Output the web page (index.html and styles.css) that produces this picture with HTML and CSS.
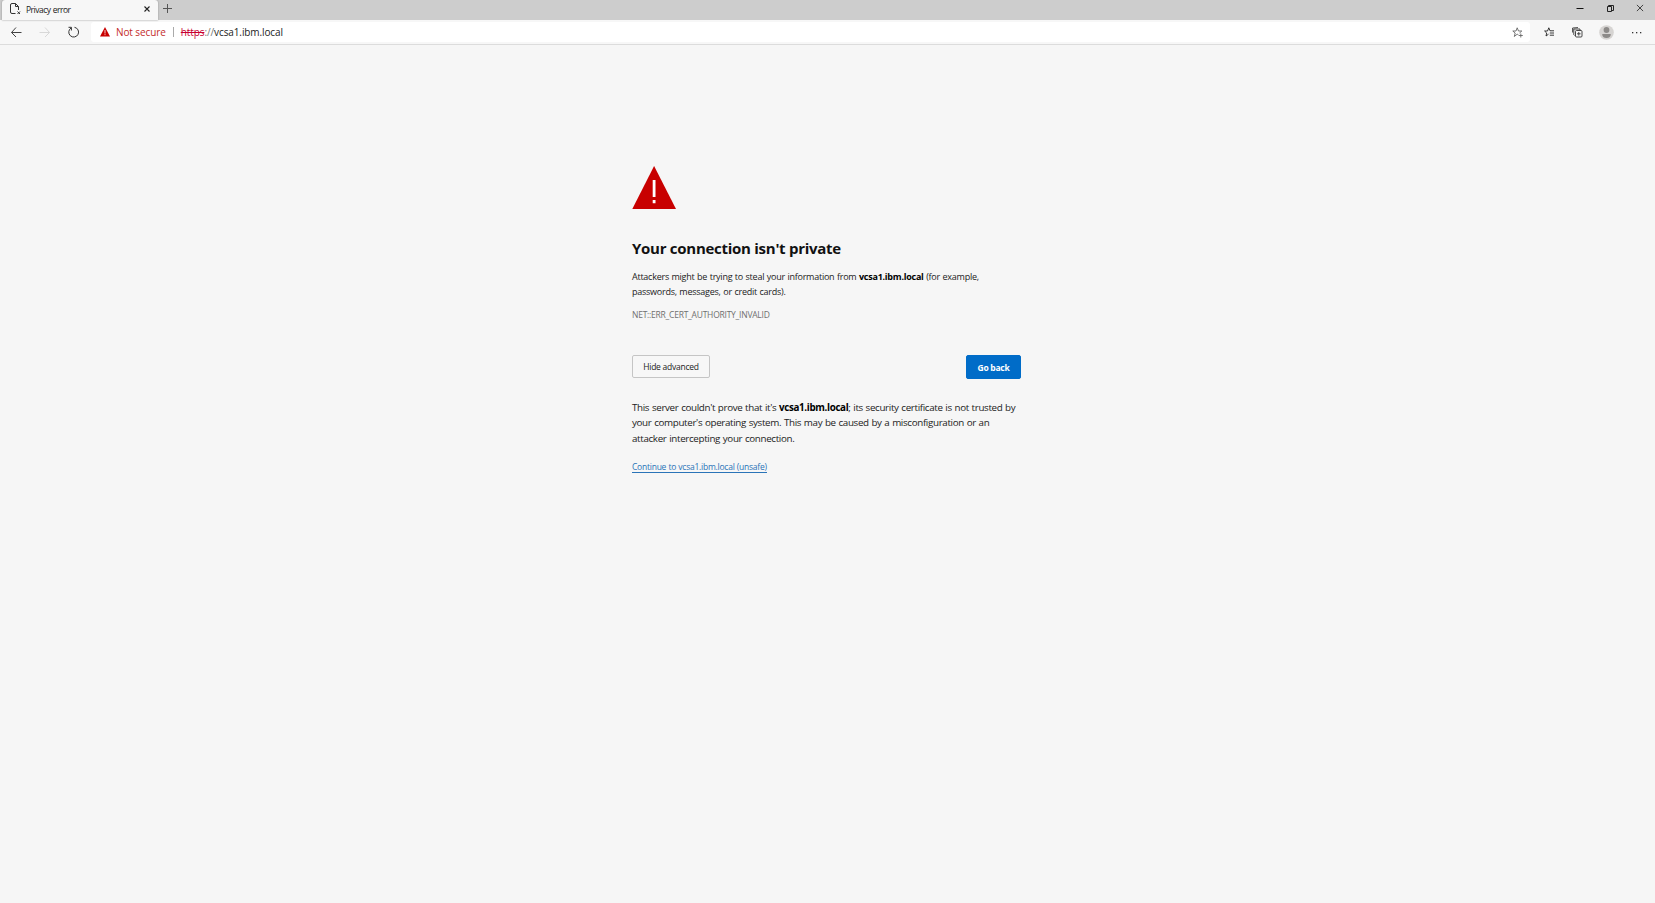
FILE: index.html
```html
<!DOCTYPE html>
<html lang="en">
<head>
    <meta charset="UTF-8">
    <title>Privacy error</title>
    <link rel="stylesheet" href="styles.css">
</head>
<body>
    <header class="browser">
        <div class="tab-strip">
            <div class="tab">
                <svg class="page-icon" width="11" height="12" viewBox="0 0 11 12" fill="none" stroke="#333">
                    <path d="M5.5 10.5H2Q.5 10.5 .5 9V2Q.5.5 2 .5H5.5L8.5 3.5V7M5.5.5V3.5H8.5"/>
                    <path d="M7.5 8.5L10 11M10 8.5L7.5 11"/>
                </svg>
                <span class="tab-title">Privacy error</span>
                <svg class="tab-close" width="6" height="6" viewBox="0 0 6 6" stroke="#222" stroke-width="1.1">
                    <path d="M.5.5L5.5 5.5M5.5.5L.5 5.5"/>
                </svg>
            </div>
            <svg class="new-tab" width="9" height="9" viewBox="0 0 9 9" stroke="#555">
                <path d="M4.5 0V9M0 4.5H9"/>
            </svg>
            <div class="window-controls">
                <svg width="8" height="8" viewBox="0 0 8 8" stroke="#111"><path d="M.5 4.5H7.5"/></svg>
                <svg width="8" height="8" viewBox="0 0 8 8" fill="none" stroke="#222"><path d="M1.5 2.5H5.5V7.5H1.5ZM2.5 2.5V1.5H7.5V6.5H5.5"/></svg>
                <svg width="8" height="8" viewBox="0 0 8 8" stroke="#333" stroke-width=".9"><path d="M.9.9L7.1 7.1M7.1.9L.9 7.1"/></svg>
            </div>
        </div>

        <div class="toolbar">
            <div class="nav">
                <svg width="12" height="12" viewBox="0 0 12 12" fill="none" stroke="#444"><path d="M11.5 6.5H1.5M6 1.5L1.5 6.5L6 11"/></svg>
                <svg width="12" height="12" viewBox="0 0 12 12" fill="none" stroke="#d8d8d8"><path d="M.5 6.5H10.5M6 1.5L10.5 6.5L6 11"/></svg>
                <svg width="12" height="12" viewBox="0 0 12 12" fill="none" stroke="#333"><path d="M3.2 1.9A4.9 4.9 0 1 0 6.5 1.3M.5 1.3H3.4V4.5"/></svg>
            </div>
            <div class="address-bar">
                <svg class="warn-icon" width="10" height="10" viewBox="0 0 10 10">
                    <path d="M5 0L10 9.5H0Z" fill="#c80000"/>
                    <path d="M5 3V6.5M5 7.2V8.2" stroke="#fff" stroke-width=".8"/>
                </svg>
                <span class="not-secure">Not secure</span>
                <span class="divider"></span>
                <span class="url"><span class="scheme">https</span><span class="slashes">://</span>vcsa1.ibm.local</span>
                <svg class="star" width="12" height="11" viewBox="0 0 12 11" fill="none" stroke="#666" stroke-width=".9">
                    <path d="M6.5 8L5.2 7.2L2.3 9.5L3.2 6L.8 4H4L5.2.8L6.5 4H9.8L7.5 6M8.8 6.5V10.5M6.8 8.5H10.8"/>
                </svg>
            </div>
            <div class="actions">
                <svg width="11" height="10" viewBox="0 0 11 10" fill="none" stroke="#222" stroke-width=".9">
                    <path d="M4.5 7.2L2 9L2.7 6L.6 4H3.5L4.8.8L6 3.8H10M5.8 6H10M5.8 8.2H10"/>
                </svg>
                <svg width="11" height="11" viewBox="0 0 11 11" fill="none" stroke="#333" stroke-width=".9">
                    <rect x="3.5" y="3.5" width="6.5" height="6.5" rx="1"/>
                    <path d="M6.8 5V8.6M5 6.8H8.6M2.5 8.5L1.8 7.8V2H8V3M.6 5.5V1L6 .6"/>
                </svg>
                <svg width="15" height="15" viewBox="0 0 15 15">
                    <circle cx="7.5" cy="7.5" r="7.3" fill="#d6d4d2"/>
                    <circle cx="7.5" cy="5" r="2.9" fill="#8c8a88"/>
                    <path d="M3.2 9H11.8Q11.8 13 7.5 13T3.2 9Z" fill="#8c8a88"/>
                </svg>
                <svg width="11" height="3" viewBox="0 0 11 3" fill="#333">
                    <rect x="1" y="1" width="1.3" height="1.3"/><rect x="5" y="1" width="1.3" height="1.3"/><rect x="9" y="1" width="1.3" height="1.3"/>
                </svg>
            </div>
        </div>
    </header>

    <main class="interstitial">
        <svg class="alert-icon" width="44" height="43" viewBox="0 0 44 43">
            <path d="M22.1 0L44 43H.3Z" fill="#c80000"/>
            <path d="M20.7 14H23.5V31H20.7ZM20.7 34H23.5V37.3H20.7Z" fill="#fff"/>
        </svg>
        <h1>Your connection isn't private</h1>
        <p class="summary">Attackers might be trying to steal your information from <strong>vcsa1.ibm.local</strong> (for example,<br>passwords, messages, or credit cards).</p>
        <p class="error-code">NET::ERR_CERT_AUTHORITY_INVALID</p>
        <div class="buttons">
            <button class="btn">Hide advanced</button>
            <button class="btn btn-primary">Go back</button>
        </div>
        <p class="details">This server couldn't prove that it's <strong>vcsa1.ibm.local</strong>; its security certificate is not trusted by<br>your computer's operating system. This may be caused by a misconfiguration or an<br>attacker intercepting your connection.</p>
        <a class="proceed" href="#">Continue to vcsa1.ibm.local (unsafe)</a>
    </main>
</body>
</html>
```
FILE: styles.css
```css
* {
    margin: 0;
    padding: 0;
    box-sizing: border-box;
}

body {
    height: 100vh;
    overflow: hidden;
    background: #f6f6f6;
    color: #222;
    font-family: "Open Sans", "Noto Sans", sans-serif;
    font-size: 9px;
    white-space: nowrap;
}

svg {
    display: block;
    flex: none;
}

.tab-strip {
    display: flex;
    height: 20px;
    background: #cdcdcd;
}

.tab {
    display: flex;
    align-items: center;
    width: 156px;
    margin-left: 2px;
    padding: 0 8px 2px;
    background: #f7f7f7;
    border-radius: 3px 3px 0 0;
    box-shadow: 0 0 2px #888;
}

.tab-title {
    margin-left: 5px;
    font-size: 8.5px;
    letter-spacing: -0.5px;
    word-spacing: 0.5px;
}

.tab-close {
    margin-left: auto;
}

.new-tab {
    margin: 4px 0 0 5px;
}

.window-controls {
    display: flex;
    gap: 22px;
    margin: 4px 11px 0 auto;
}

.toolbar {
    display: flex;
    align-items: center;
    height: 25px;
    padding: 0 13px 0 10px;
    background: #f7f7f7;
    border-bottom: 1px solid #dcdcdc;
}

.nav {
    display: flex;
    gap: 17px;
}

.address-bar {
    display: flex;
    align-items: center;
    flex: 1;
    height: 20px;
    margin-left: 11px;
    padding: 0 6px 0 9px;
    background: #fff;
    border-radius: 3px;
}

.not-secure {
    margin-left: 6px;
    color: #c42b2b;
    font-size: 10px;
    letter-spacing: -0.1px;
}

.divider {
    width: 1px;
    height: 10px;
    margin: 0 7px;
    background: #aaa;
}

.url {
    font-size: 10px;
    letter-spacing: -0.1px;
}

.scheme {
    color: #c80032;
    text-decoration: line-through;
}

.slashes {
    color: #777;
}

.star {
    margin-left: auto;
}

.actions {
    display: flex;
    align-items: center;
    justify-content: space-between;
    width: 98px;
    margin-left: 14px;
}

.interstitial {
    width: 389px;
    margin: 121px 0 0 632px;
}

h1 {
    margin-top: 28px;
    color: #111;
    font-size: 15px;
    line-height: 22px;
    font-weight: 700;
    letter-spacing: -0.27px;
}

.summary {
    margin-top: 10px;
    font-size: 9px;
    line-height: 15px;
    letter-spacing: -0.25px;
    word-spacing: 0.5px;
}

strong {
    color: #000;
    font-weight: 700;
}

.error-code {
    margin-top: 9px;
    color: #707070;
    font-size: 8.5px;
    line-height: 14px;
    letter-spacing: -0.24px;
}

.buttons {
    display: flex;
    justify-content: space-between;
    align-items: flex-start;
    margin-top: 33px;
}

.btn {
    width: 78px;
    height: 23px;
    background: #f7f7f7;
    border: 1px solid #c5c5c5;
    border-radius: 2px;
    color: #222;
    font-family: inherit;
    font-size: 8.5px;
    letter-spacing: -0.25px;
}

.btn-primary {
    width: 55px;
    height: 24px;
    background: #006cc8;
    border-color: #006cc8;
    color: #fff;
    font-weight: 700;
}

.details {
    margin-top: 21px;
    font-size: 9.8px;
    line-height: 15.4px;
    letter-spacing: -0.34px;
    word-spacing: 0.5px;
}

.proceed {
    display: inline-block;
    margin-top: 15px;
    border-bottom: 1px solid #2a74b8;
    color: #2a74b8;
    font-size: 8.5px;
    line-height: 11px;
    letter-spacing: -0.24px;
    word-spacing: 0.3px;
    text-decoration: none;
}
```
